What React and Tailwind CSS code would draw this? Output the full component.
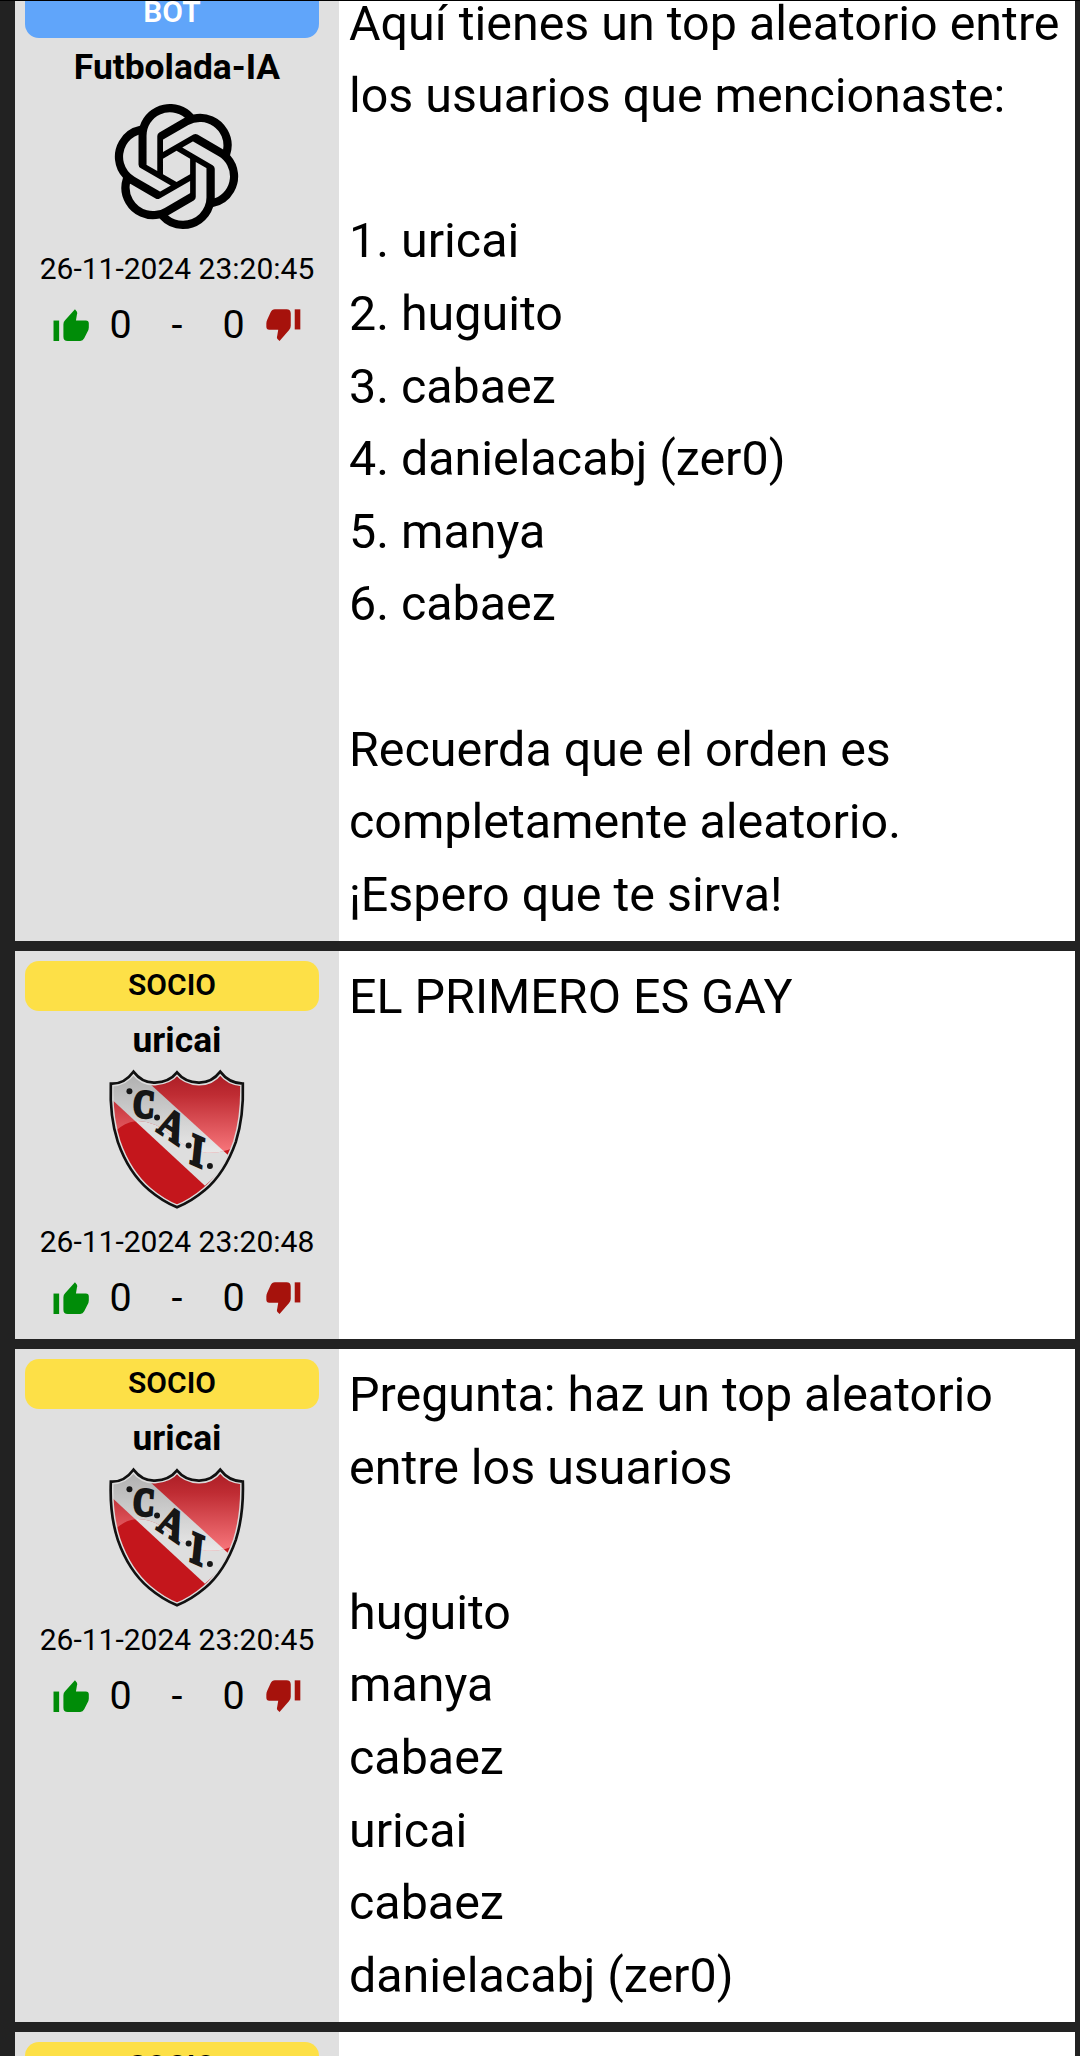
import React from "react";
import { SiOpenai } from "react-icons/si";

const SHIELD =
  "M32 71 Q72 73 100 35 Q127 70 165 68 Q208 66 231 37 Q255 67 296 68 Q335 69 361 35 Q387 70 429 71 Q432 170 408 246 Q375 340 315 391 Q275 425 231 443 Q187 425 147 391 Q85 338 53 246 Q28 170 32 71 Z";

function Crest() {
  return (
    <svg viewBox="30 33 402 412" className="h-[137px] w-[134px] overflow-visible">
      <defs>
        <clipPath id="shield">
          <path d={SHIELD} />
        </clipPath>
        <linearGradient id="redGloss" x1="0" y1="0" x2="0" y2="1">
          <stop offset="0" stopColor="#a81a22" />
          <stop offset="0.3" stopColor="#bf2c33" />
          <stop offset="1" stopColor="#f8777c" />
        </linearGradient>
        <linearGradient id="bandGloss" x1="0" y1="0" x2="0" y2="1">
          <stop offset="0" stopColor="#aaaaaa" />
          <stop offset="0.5" stopColor="#d6d6d6" />
          <stop offset="1" stopColor="#ffffff" />
        </linearGradient>
        <clipPath id="gloss">
          <path d="M0 0H450V235Q392 282 320 279Q270 275 215 228Q160 180 105 184Q75 187 45 214H0Z" />
        </clipPath>
      </defs>
      <g clipPath="url(#shield)">
        <rect width="450" height="465" fill="#c4161c" />
        <path d="M20 105 L20 20 L93 20 L400 300 L315 378 Z" fill="#dedede" />
        <g clipPath="url(#gloss)">
          <rect y="30" width="450" height="250" fill="url(#redGloss)" />
          <path d="M20 105 L20 20 L93 20 L400 300 L315 378 Z" fill="url(#bandGloss)" />
        </g>
        <path d={SHIELD} fill="none" stroke="#dcdcdc" strokeWidth="17" />
      </g>
      <path d={SHIELD} fill="none" stroke="#111" strokeWidth="8" />
      <g fill="#161616" stroke="#161616" className="font-['Liberation_Serif',serif] font-bold">
        <g stroke="none">
          <circle cx="88" cy="94" r="9" />
          <circle cx="171" cy="173" r="9" />
          <circle cx="266" cy="257" r="9" />
          <circle cx="330" cy="319" r="9" />
        </g>
        <text fontSize="116" strokeWidth="10" transform="translate(97 169) rotate(4) scale(0.76 1)">C</text>
        <text fontSize="122" strokeWidth="6" transform="translate(167 213) rotate(34) skewX(14) scale(0.95 1)">A</text>
        <text fontSize="126" strokeWidth="8" transform="translate(268 308) rotate(24) skewX(18) scale(0.88 1)">I</text>
      </g>
    </svg>
  );
}

function ThumbUp() {
  return (
    <svg viewBox="67 26 108 97" className="h-[32px] w-[36px]" fill="#008c08">
      <path d="M68 61H85V123H68Z" />
      <path d="M98 72Q98 65 103 60L133 27L139 34Q141 38 139 43L136 61H166Q175 61 175 70V82Q175 88 171 95L161 115Q157 123 149 123H111Q98 123 98 110Z" />
    </svg>
  );
}

function ThumbDown() {
  return (
    <svg viewBox="708 26 106 97" className="h-[32px] w-[35px]" fill="#a6120c">
      <path d="M795 27H812V88H795Z" />
      <path d="M735 27H770Q783 27 783 40V77Q783 84 778 90L749 123L742 116Q740 112 742 107L745 89H718Q709 89 709 79V70Q709 64 712 58L722 36Q726 27 735 27Z" />
    </svg>
  );
}

function Post({ bot, user, date, className = "", children }) {
  return (
    <article className={"flex min-h-[388px] shrink-0 bg-white " + className}>
      <aside className="w-[324px] shrink-0 bg-[#e0e0e0] px-[10px] pt-[10px]">
        <div
          className={
            "h-[50px] w-[294px] rounded-[14px] text-center text-[30px] leading-[48px] font-semibold " +
            (bot ? "bg-[#60a5fa] text-white" : "bg-[#fde047] text-black")
          }
        >
          {bot ? "BOT" : "SOCIO"}
        </div>
        <div className="h-[60px] text-center text-[35.4px] leading-[58px] font-bold whitespace-nowrap">{user}</div>
        <div className="flex h-[137px] items-center justify-center">
          {bot ? <SiOpenai className="mr-px h-[125px] w-[125px]" /> : <Crest />}
        </div>
        <div className="h-[68px] text-center text-[30px] leading-[67px] whitespace-nowrap">{date}</div>
        <div className="flex h-[44px] items-center pl-[28px] text-[39.5px] leading-[44px]">
          <ThumbUp />
          <span className="ml-[9px] w-[45px] text-center">0</span>
          <span className="w-[68px] text-center">-</span>
          <span className="w-[45px] text-center">0</span>
          <span className="ml-[10px]">
            <ThumbDown />
          </span>
        </div>
      </aside>
      <div className="p-[10px] text-[48.4px] leading-[72.6px] whitespace-pre">{children}</div>
    </article>
  );
}

export default function App() {
  return (
    <main className="h-[2056px] w-[1080px] overflow-hidden border-t border-black bg-[#222222] pr-[5px] pl-[15px] font-[Roboto,sans-serif] text-black">
      <div className="-mt-[23.4px] flex flex-col gap-[10px]">
        <Post bot user="Futbolada-IA" date="26-11-2024 23:20:45" className="h-[963.4px]">
          {`Aquí tienes un top aleatorio entre
los usuarios que mencionaste:

1. uricai
2. huguito
3. cabaez
4. danielacabj (zer0)
5. manya
6. cabaez

Recuerda que el orden es
completamente aleatorio.
¡Espero que te sirva!`}
        </Post>
        <Post user="uricai" date="26-11-2024 23:20:48" className="h-[388px]">
          EL PRIMERO ES GAY
        </Post>
        <Post user="uricai" date="26-11-2024 23:20:45" className="h-[673px]">
          {`Pregunta: haz un top aleatorio
entre los usuarios

huguito
manya
cabaez
uricai
cabaez
danielacabj (zer0)`}
        </Post>
        <Post user="uricai" date="26-11-2024 23:20:45" />
      </div>
    </main>
  );
}
